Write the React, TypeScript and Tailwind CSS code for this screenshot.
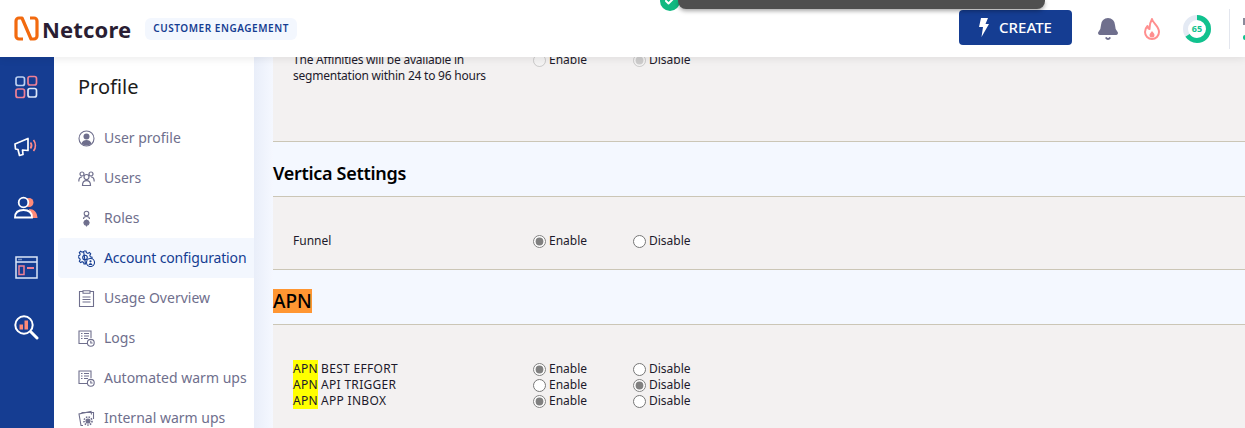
import React from 'react';
import { Bell, Check } from 'lucide-react';

const FONT = "font-['Noto_Sans',sans-serif]";

const IconUser = () => (
  <svg width="17" height="17" viewBox="0 0 17 17" fill="none" stroke="#6f6f8d">
    <circle cx="8.5" cy="8.5" r="7.5" strokeWidth="1.1" />
    <circle cx="8.5" cy="6.5" r="3" fill="#6f6f8d" stroke="none" />
    <path d="M3.4 13.4c.9-2.5 2.9-3.5 5.1-3.5s4.200 1 5.100 3.500a7.400 7.400 0 0 1-10.200 0z" fill="#6f6f8d" stroke="none" />
  </svg>
);
const IconUsers = () => (
  <svg width="17" height="17" viewBox="0 0 17 17" fill="none" stroke="#6f6f8d" strokeWidth="1.200">
    <circle cx="8.5" cy="7" r="2.500" />
    <path d="M4.500 15.500c0-3.300 1.500-4.800 4-4.800s4 1.500 4 4.800z" />
    <circle cx="4" cy="4" r="2" />
    <circle cx="13" cy="4" r="2" />
    <path d="M.8 11.500c0-3 1-4.500 3.200-4.500M16.200 11.500c0-3-1-4.500-3.200-4.500" />
  </svg>
);
const IconRoles = () => (
  <svg width="17" height="17" viewBox="0 0 17 17" fill="none" stroke="#6f6f8d" strokeWidth="1.100">
    <circle cx="8.500" cy="3.500" r="2.300" />
    <path d="M5.500 9c0-1.800 1.200-2.500 3-2.500s3 .7 3 2.500" />
    <circle cx="8.500" cy="12.800" r="2.400" fill="#6f6f8d" />
    <path d="M8.500 9.500v1M8.500 15v1.500M5.500 12.800h1M10.500 12.800h1" />
  </svg>
);
const IconGear = () => (
  <svg width="17" height="17" viewBox="0 0 17 17" fill="none" stroke="#153d92" strokeWidth="1.100">
    <circle cx="7" cy="7.500" r="2.300" />
    <path d="M6 1h2l.4 1.700 1.500.7 1.500-.9 1.300 1.400-.9 1.500.6 1.500 1.600.4v1.500M7.500 14H6l-.4-1.700-1.500-.6-1.500.9L1.300 11.200l.9-1.500-.6-1.500L0 7.800V6l1.600-.4.600-1.500-.9-1.500 1.300-1.300 1.500.9 1.500-.7z" />
    <circle cx="12.500" cy="12.500" r="4" fill="#fff" />
    <circle cx="12.500" cy="11.300" r="1.100" fill="#153d92" stroke="none" />
    <path d="M10.500 15c.3-1.300 1-1.800 2-1.800s1.700.5 2 1.800" fill="#153d92" stroke="none" />
  </svg>
);
const IconUsage = () => (
  <svg width="17" height="17" viewBox="0 0 17 17" fill="none" stroke="#6f6f8d" strokeWidth="1.100">
    <path d="M5 1.500H1.500v15h14v-15H12" />
    <path d="M5 .8h7v2.400H5zM4.500 7h8M4.500 9.500h8M4.500 12h8" />
  </svg>
);
const IconLogs = () => (
  <svg width="17" height="17" viewBox="0 0 17 17" fill="none" stroke="#6f6f8d" strokeWidth="1.100">
    <path d="M9 13.500H1V1h12v7" />
    <path d="M3 3.500h1.500M3 6h1.500M3 8.500h1.500M6 3.500h5M6 6h5M6 8.500h4" />
    <circle cx="12.800" cy="12.800" r="3.400" fill="#fff" />
    <path d="M12.800 10.800v2.200h1.800" />
  </svg>
);
const IconWarm = () => (
  <svg width="17" height="17" viewBox="0 0 17 17" fill="none" stroke="#6f6f8d" strokeWidth="1.100">
    <path d="M5 15.500H3L1 4l12-2.500.5 3M4 4V2.500h11.500V9" />
    <circle cx="10" cy="11" r="2" fill="#6f6f8d" />
    <circle cx="10" cy="11" r="4" strokeDasharray="1.500 1.200" strokeWidth="1.600" />
  </svg>
);

const navItems = [
  { label: 'User profile', icon: <IconUser /> },
  { label: 'Users', icon: <IconUsers /> },
  { label: 'Roles', icon: <IconRoles /> },
  { label: 'Account configuration', icon: <IconGear />, active: true },
  { label: 'Usage Overview', icon: <IconUsage /> },
  { label: 'Logs', icon: <IconLogs /> },
  { label: 'Automated warm ups', icon: <IconLogs /> },
  { label: 'Internal warm ups', icon: <IconWarm /> },
];

const RailIcons = () => (
  <div className="flex flex-col items-center pr-[2px]">
    <div className="h-[60px] flex items-center justify-center">
      <svg width="24" height="24" viewBox="0 0 24 24" fill="none" strokeWidth="1.700">
        <rect x="2" y="2" width="8.500" height="8.500" rx="2" stroke="#bcd0f0" />
        <rect x="14" y="1.500" width="8.500" height="8.500" rx="2" stroke="#ef8095" />
        <rect x="2" y="14" width="8.500" height="8.500" rx="2" stroke="#ef8095" />
        <rect x="14" y="13.500" width="8.500" height="8.500" rx="2" stroke="#dbe6f8" />
      </svg>
    </div>
    <div className="h-[60px] flex items-center justify-center">
      <svg width="24" height="20" viewBox="0 0 24 20" fill="none" strokeWidth="1.700" strokeLinejoin="round">
        <path d="M1 7l13-5.500v12L8.500 13l.5 4.500-3.500 1-1.500-6L1.500 12z" stroke="#fff" />
        <path d="M16.500 5.500a5 5 0 0 1 0 6" stroke="#ff8a8a" />
        <path d="M19.500 3a9 9 0 0 1 0 11" stroke="#ff8a8a" />
      </svg>
    </div>
    <div className="h-[60px] flex items-center justify-center">
      <svg width="24" height="23" viewBox="0 0 24 23" fill="none" strokeWidth="1.800">
        <circle cx="15" cy="6.500" r="4.500" fill="#ff8a78" />
        <path d="M15 13c5 0 8 3 8.500 9H18z" fill="#ff8a78" />
        <circle cx="9.500" cy="6.500" r="4.800" stroke="#fff" fill="#153d92" />
        <path d="M1 21.500c0-5 3-7.500 8.500-7.500s8.500 2.500 8.500 7.500z" stroke="#fff" fill="#153d92" />
      </svg>
    </div>
    <div className="h-[60px] flex items-center justify-center">
      <svg width="23" height="23" viewBox="0 0 23 23" fill="none" strokeWidth="1.500">
        <rect x="1" y="1" width="21" height="21" stroke="#dbe6f8" />
        <path d="M1 6h21" stroke="#dbe6f8" />
        <path d="M3.500 3.500h4" stroke="#dbe6f8" strokeDasharray="1 1" />
        <rect x="4" y="10" width="5" height="8.500" stroke="#ef8095" />
        <path d="M12 12h7" stroke="#ef8095" strokeWidth="2" />
      </svg>
    </div>
    <div className="h-[60px] flex items-center justify-center">
      <svg width="25" height="25" viewBox="0 0 25 25" fill="none">
        <circle cx="10" cy="10" r="8.700" stroke="#fff" strokeWidth="2" />
        <rect x="5.500" y="9.500" width="3.500" height="5" fill="#ff8a78" />
        <rect x="10.500" y="5.500" width="3.500" height="9" fill="#ff8a78" />
        <path d="M17 17l6 6" stroke="#fff" strokeWidth="3" strokeLinecap="round" />
      </svg>
    </div>
  </div>
);

const Row = ({ label, value, disabled }: { label: React.ReactNode; value: 'on' | 'off' | 'none'; disabled?: boolean }) => (
  <div className="grid grid-cols-[240px_100px_100px] items-start text-xs leading-4 text-[#1d1a2b]">
    <div className="pr-6">{label}</div>
    <label className="flex items-center gap-[3px]">
      <input type="radio" readOnly disabled={disabled} checked={value === 'on'} className="m-0 w-[13px] h-[13px] accent-[#808080]" />
      <span>Enable</span>
    </label>
    <label className="flex items-center gap-[3px]">
      <input type="radio" readOnly disabled={disabled} checked={value === 'off'} className="m-0 w-[13px] h-[13px] accent-[#808080]" />
      <span>Disable</span>
    </label>
  </div>
);

const ApnLabel = ({ children }: { children: React.ReactNode }) => (
  <>
    <span className="bg-[#ffff00] tracking-[0.3px]">APN</span> <span className="tracking-[0.3px]">{children}</span>
  </>
);

const SectionTitle = ({ children }: { children: React.ReactNode }) => (
  <div className="h-[55px] pt-2 flex items-center bg-[#f4f8ff] text-lg font-semibold text-black border-b border-[#cbc6b6]">
    {children}
  </div>
);

export default function App() {
  return (
    <div className={`w-[1245px] h-[428px] overflow-hidden flex flex-col bg-white ${FONT}`}>
      <header className="relative z-10 h-[57px] shrink-0 bg-white flex items-center shadow-[0_2px_8px_rgba(0,0,0,0.08)]">
        <div className="flex items-center pl-[14px]">
          <svg width="25" height="25" viewBox="0 0 25 25" fill="none" stroke="#f26a0f" strokeWidth="3.200" strokeLinejoin="round">
            <path d="M9 23H5a3 3 0 0 1-3-3V5a3 3 0 0 1 3-3h3l9 21h3a3 3 0 0 0 3-3V5a3 3 0 0 0-3-3h-4" />
          </svg>
          <span className="ml-[3px] text-[22px] leading-none font-bold tracking-[0.15px] text-[#2a1e33]">Netcore</span>
          <span className="ml-[14px] h-[22px] px-2 flex items-center rounded-md bg-[#f3f7fe] text-[10px] font-semibold tracking-[0.55px] text-[#153d92]">CUSTOMER ENGAGEMENT</span>
        </div>
        <div className="absolute left-[660px] -top-[9px] w-[20px] h-[20px] rounded-full bg-[#10b981] flex items-center justify-center">
          <Check size={12} strokeWidth={4} className="text-white" />
        </div>
        <div className="absolute left-[678px] top-0 w-[367px] h-[9px] rounded-b-lg bg-[#4f4f4f] shadow-[0_2px_4px_rgba(0,0,0,0.35)]" />
        <div className="ml-auto flex items-center">
          <button className="w-[113px] h-[35px] mb-[2px] rounded bg-[#153d92] flex items-center justify-center gap-[10px] text-white text-[15px] font-medium">
            <svg width="10" height="19" viewBox="0 0 10 19" fill="#fff">
              <path d="M2 0h7L6.500 6H10L2.500 19 4 9H0z" />
            </svg>
            CREATE
          </button>
          <Bell size={24} fill="#6f6f8d" stroke="#6f6f8d" className="ml-[24px]" />
          <svg width="16" height="22" viewBox="0 0 16 22" fill="none" className="ml-[24px]">
            <path d="M8 1c.5 4 7 7 7 13a7 7 0 0 1-14 0c0-3 1.500-5 2.500-6 .3 1.500 1 2.500 2 3C5.500 7 6.500 3.500 8 1z" stroke="#ff8f8f" strokeWidth="2" strokeLinejoin="round" />
            <path d="M8 13c.5 1.200 2.500 2 2.500 4a2.500 2.500 0 0 1-5 0c0-1.500 1.700-2.500 2.500-4z" fill="#ff8f8f" />
          </svg>
          <svg width="30" height="30" viewBox="0 0 30 30" className="ml-[22px]">
            <circle cx="15" cy="15" r="11.500" fill="none" stroke="#e4eaf4" strokeWidth="5" />
            <circle cx="15" cy="15" r="11.500" fill="none" stroke="#10c28e" strokeWidth="5" strokeDasharray="47 72.300" transform="rotate(-90 15 15)" />
            <text x="15" y="18" textAnchor="middle" fontSize="9" fontWeight="700" fill="#10c28e">65</text>
          </svg>
          <div className="ml-[17px] w-px h-[40px] bg-[#e3e6ee]" />
          <div className="ml-[13px] w-[2px] flex flex-col gap-[10px]">
            <div className="h-[7px] bg-[#8a8a9a]" />
            <div className="h-[5px] bg-[#10c28e] rounded-l" />
          </div>
        </div>
      </header>

      <div className="flex flex-1 min-h-0">
        <aside className="w-[54px] shrink-0 bg-[#153d92]">
          <RailIcons />
        </aside>
        <nav className="w-[200px] shrink-0 bg-white">
          <h1 className="pl-6 pt-[16px] h-[61px] text-xl leading-7 text-[#1c1c1c]">Profile</h1>
          <ul className="pl-1">
            {navItems.map(item => (
              <li
                key={item.label}
                className={`h-10 pl-5 flex items-center gap-[9px] text-sm whitespace-nowrap rounded-l ${item.active ? 'bg-[#f3f7fe] text-[#153d92] tracking-[-0.15px]' : 'text-[#6f6f8d]'}`}
              >
                <span className="shrink-0 w-[17px] h-[17px]">{item.icon}</span>
                {item.label}
              </li>
            ))}
          </ul>
        </nav>
        <div className="w-[19px] shrink-0 bg-gradient-to-r from-[#e9eef9] to-[#f5f8ff]" />
        <main className="flex-1 min-w-0 bg-[#f3f1f1]">
          <section className="-mt-[5px] pl-5 h-[90px] border-b border-[#cbc6b6]">
            <Row label={<span className="tracking-[-0.23px]">The Affinities will be available in segmentation within 24 to 96 hours</span>} value="off" disabled />
          </section>
          <SectionTitle><span className="tracking-[-0.3px]">Vertica Settings</span></SectionTitle>
          <section className="pt-9 pl-5 h-[73px] border-b border-[#cbc6b6]">
            <Row label="Funnel" value="on" />
          </section>
          <SectionTitle><span className="inline-block leading-6 bg-[#ff9632] text-[19px] font-medium">APN</span></SectionTitle>
          <section className="pt-9 pl-5">
            <Row label={<ApnLabel>BEST EFFORT</ApnLabel>} value="on" />
            <Row label={<ApnLabel>API TRIGGER</ApnLabel>} value="off" />
            <Row label={<ApnLabel>APP INBOX</ApnLabel>} value="on" />
          </section>
        </main>
      </div>
    </div>
  );
}
